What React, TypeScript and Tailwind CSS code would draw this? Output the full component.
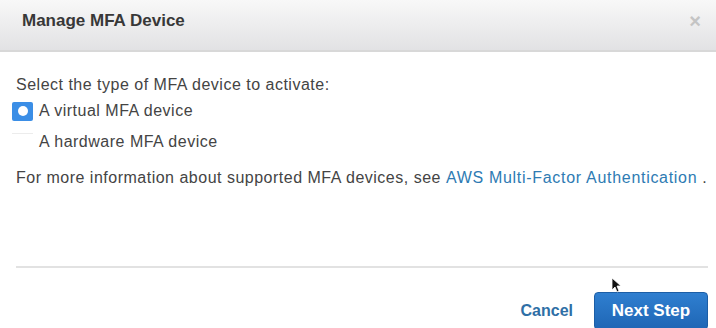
export default function App() {
  return (
    <div className="relative w-[716px] h-[328px] overflow-hidden bg-white font-['Liberation_Sans',Arial,sans-serif]">
      <div className="h-[52px] flex items-center justify-between pl-[22px] pr-[15px] bg-gradient-to-b from-[#f8f8f8] to-[#e2e2e4] border-b-2 border-[#d8d8d8]">
        <h1 className="text-[17px] font-bold text-[#383838] -mt-[8px]">Manage MFA Device</h1>
        <span className="text-[20px] font-bold text-[#c4c4c4] -mt-[8px]">×</span>
      </div>
      <div className="pl-[16px] pr-[8px] pt-[23px] text-[16px] text-[#444] tracking-[0.5px]">
        <p className="leading-[20px]">Select the type of MFA device to activate:</p>
        <div className="mt-[6px] flex items-center h-[20px] -ml-[4px]">
          <span className="w-[21px] h-[19px] bg-[#3b8ee6] rounded-[2px] flex items-center justify-center">
            <span className="w-[10px] h-[10px] rounded-full bg-white"></span>
          </span>
          <span className="ml-[6px]">A virtual MFA device</span>
        </div>
        <div className="mt-[11px] flex items-center h-[20px] -ml-[4px]">
          <span className="w-[21px] h-[19px] flex items-start">
            <span className="w-[21px] border-t border-[#ececec]"></span>
          </span>
          <span className="ml-[6px]">A hardware MFA device</span>
        </div>
        <p className="mt-[16px] leading-[20px] whitespace-nowrap">
          For more information about supported MFA devices, see{" "}
          <a className="text-[#2e7bb3] tracking-[0.7px]">AWS Multi-Factor Authentication</a> .
        </p>
        <div className="mt-[78px] border-t-2 border-[#e2e2e2]"></div>
        <div className="mt-[24px] flex items-center justify-end gap-[21px] tracking-normal">
          <span className="text-[16px] font-bold text-[#2f6fa6]">Cancel</span>
          <button className="w-[114px] h-[38px] rounded-[4px] bg-gradient-to-b from-[#2f7fd0] to-[#1f66b5] border border-[#1c5ea6] text-white font-bold text-[17px]">Next Step</button>
        </div>
      </div>
      <svg className="absolute left-[611px] top-[277px]" width="10" height="16" viewBox="0 0 10 16">
        <path d="M1 1 L1 13 L4 10 L6 15 L8 14 L6 9 L10 9 Z" fill="#111" stroke="#fff" strokeWidth="0.8" />
      </svg>
    </div>
  );
}
